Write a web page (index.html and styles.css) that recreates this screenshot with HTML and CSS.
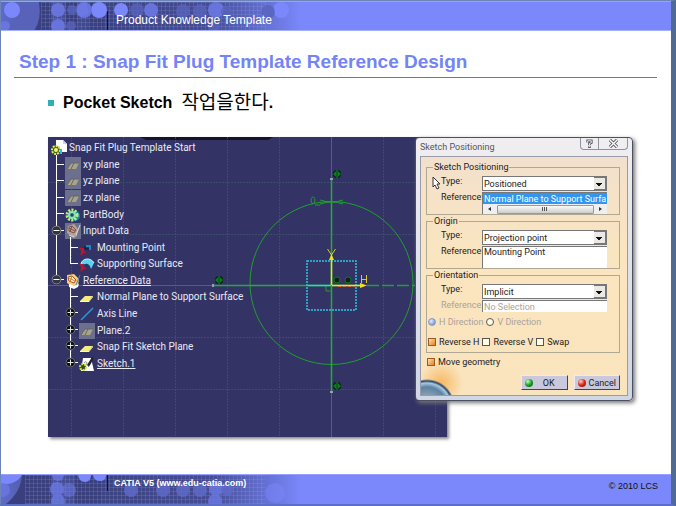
FILE: index.html
```html
<!DOCTYPE html>
<html lang="ko">
<head>
    <meta charset="UTF-8">
    <meta name="viewport" content="width=device-width, initial-scale=1.0">
    <title>Product Knowledge Template</title>
    <link rel="stylesheet" href="styles.css">
</head>
<body>
<!-- Shared icons -->
<svg class="sprite" aria-hidden="true">
    <defs>
        <symbol id="plane" viewBox="0 0 16 16">
            <path d="M1 12 6 7h8l-4 5z" fill="#f4ec7c"/>
            <path d="M1 12h9l4-5v1l-4 5H1z" fill="#fffbd0"/>
        </symbol>
        <symbol id="plane-hidden" viewBox="0 0 16 16">
            <rect width="16" height="16" fill="#6c708e"/>
            <path d="M2 12 6 6h8l-3 6z" fill="#aaa487"/>
            <path d="M2 12 6 6h8M6 12l3-6" fill="none" stroke="#62646c"/>
        </symbol>
        <symbol id="gear" viewBox="0 0 16 16">
            <circle cx="10" cy="9" r="5" fill="#168ca0"/>
            <circle cx="7" cy="8" r="5" fill="none" stroke="#b7f084" stroke-width="3" stroke-dasharray="2 1.2"/>
            <circle cx="7" cy="8" r="3" fill="#2e756a" stroke="#8fe0b8" stroke-width="2"/>
            <circle cx="7" cy="8" r="1" fill="#193c5b"/>
        </symbol>
        <symbol id="part" viewBox="0 0 16 16">
            <path d="M5 0h7l4 4v8H5z" fill="#fff"/>
            <path d="M12 0v4h4" fill="#cdd3ef"/>
            <circle cx="5" cy="10" r="4" fill="#45621d" stroke="#d9ed4b" stroke-width="2" stroke-dasharray="2 1"/>
            <circle cx="5" cy="10" r="2" fill="#f3f383"/>
            <path d="M10 9v5" stroke="#39b8dc" stroke-width="2"/>
        </symbol>
        <symbol id="set" viewBox="0 0 16 16">
            <path d="M2 2 9 1l5 5-1 7-4 2-7-5z" fill="#f6cf72"/>
            <path d="m3 4 4-1 4 4-2 3-5-2z" fill="#fff2bd" stroke="#a6542d"/>
            <path d="m4 5 6 3M7 3 5 9" stroke="#d78335"/>
            <path d="M4 11c3 0 4 2 6 2l4-2-1 3-4 2-5-2z" fill="#fff"/>
            <path d="m11 12 4-10" stroke="#4685ce"/>
        </symbol>
        <symbol id="set-hidden" viewBox="0 0 16 16">
            <rect width="16" height="16" fill="#6c708e"/>
            <path d="M3 3 9 1l4 5-1 7-3 2-7-5z" fill="#b5a594"/>
            <path d="m4 4 3-1 4 4-2 3-5-2zM4 5l6 3M7 3 5 9" fill="none" stroke="#81504c"/>
            <path d="m11 12 4-10M4 12l5 2" stroke="#d5d8df"/>
        </symbol>
        <symbol id="point" viewBox="0 0 16 16">
            <path d="M7 6h4v4" fill="none" stroke="#2184c9" stroke-width="2"/>
            <path d="M6 6v3h4" fill="none" stroke="#11151f"/>
            <path d="M5 9H2l3 3H2M4 12l-2 3" fill="none" stroke="#b6182c" stroke-width="2"/>
        </symbol>
        <symbol id="surface" viewBox="0 0 16 16">
            <path d="M2 8C3 2 12 1 15 7l-3 6C11 8 7 6 3 10z" fill="#5bd2ef"/>
            <path d="M2 8C3 2 12 1 15 7" fill="none" stroke="#c3f5ff"/>
            <path d="M5 9H2l3 3H2M4 12l-2 3" fill="none" stroke="#b6182c" stroke-width="2"/>
        </symbol>
        <symbol id="axis" viewBox="0 0 16 16">
            <path d="M2 14 14 2" stroke="#2a9ae0" stroke-width="1.500"/>
        </symbol>
        <symbol id="sketch" viewBox="0 0 16 16">
            <path d="M4 2h8l3 13H2z" fill="#fff"/>
            <path d="m13 1-5 8 2 2 5-9z" fill="#20242b"/>
            <path d="M5 7c2-3 4 0 2 2" fill="none" stroke="#888"/>
            <circle cx="4" cy="11" r="3" fill="#314f18" stroke="#cde449" stroke-width="2" stroke-dasharray="2 1"/>
            <path d="m9 14 2-5 3 6z" fill="#fff"/>
        </symbol>
        <symbol id="expand" viewBox="0 0 10 10">
            <circle cx="5" cy="5" r="4.500" fill="#101116" stroke="#6f727a"/>
            <path d="M2 5h6M5 2v6" stroke="#e4e4e4"/>
        </symbol>
        <symbol id="collapse" viewBox="0 0 10 10">
            <circle cx="5" cy="5" r="4.500" fill="#33363d" stroke="#85888f"/>
            <path d="M2 5h6" stroke="#fff"/>
        </symbol>
        <symbol id="coincide" viewBox="0 0 10 10">
            <circle cx="5" cy="5" r="4" fill="#071b12"/>
            <path d="M5 1v8" stroke="#13a22a"/>
            <path d="M4 2 1 5l3 3zM6 2l3 3-3 3z" fill="#0d7c1e"/>
        </symbol>
        <pattern id="weave" width="4" height="4" patternUnits="userSpaceOnUse">
            <path d="M0 .5h4M.5 0v4" stroke="#96a1ee" stroke-opacity=".2"/>
        </pattern>
        <linearGradient id="band">
            <stop offset="0" stop-color="#5f6bc9"/>
            <stop offset=".12" stop-color="#4b549f"/>
            <stop offset=".35" stop-color="#3c4382"/>
            <stop offset=".7" stop-color="#454c94"/>
            <stop offset=".88" stop-color="#6470d2"/>
            <stop offset="1" stop-color="#7a88fb"/>
        </linearGradient>
    </defs>
</svg>

<div class="slide">
    <header class="bar">
        <svg class="bar-art" viewBox="0 0 300 28" aria-hidden="true">
            <rect width="300" height="28" fill="url(#band)"/>
            <path d="M33 28Q41 15 38 0H16v13L5 28z" fill="#5762b8"/>
            <path d="M34 28Q41 18 38 0h12v28zM65 0h11v28H65zM88 0h15v28H88z" fill="#3a407e"/>
            <rect x="40" width="225" height="28" fill="url(#weave)"/>
            <g fill="#7a88fb">
                <circle cx="11" cy="8" r="8"/><circle cx="98" cy="8" r="8"/>
                <circle cx="120" cy="8" r="7"/><circle cx="280" cy="8" r="8"/>
                <path d="M76 9a8 8 0 0 1 9-8l3 10-8 4z"/>
            </g>
            <g fill="#6b78e3" opacity=".9">
                <circle cx="57" cy="8" r="7"/><circle cx="57" cy="24" r="7"/>
                <circle cx="83" cy="8" r="8"/><circle cx="150" cy="8" r="7"/>
                <circle cx="215" cy="8" r="8"/>
                <circle cx="4" cy="24" r="5"/>
            </g>
            <g fill="#5863bb" opacity=".8">
                <circle cx="71" cy="8" r="5"/><circle cx="136" cy="8" r="7"/>
                <circle cx="182" cy="9" r="7"/><circle cx="199" cy="9" r="7"/>
                <circle cx="267" cy="10" r="7"/><circle cx="70" cy="24" r="5"/>
                <circle cx="226" cy="10" r="6"/><circle cx="213" cy="25" r="6"/>
            </g>
        </svg>
        <p class="bar-title">Product Knowledge Template</p>
    </header>

    <main>
        <h1>Step 1 : Snap Fit Plug Template Reference Design</h1>
        <ul class="points">
            <li>Pocket Sketch <span class="korean">작업을한다</span>.</li>
        </ul>

        <div class="figure">
            <!-- 3D viewer with specification tree -->
            <section class="viewer">
                <svg class="drawing" viewBox="0 0 399 300" preserveAspectRatio="xMinYMin slice" aria-hidden="true">
                    <path d="M92 0h133l-5 3H98z" fill="#14142a"/>
                    <g stroke="#41596c" stroke-dasharray="2 1" opacity=".7">
                        <path d="M23.500 0v300M75.500 0v300M127.500 0v300M179.500 0v300M231.500 0v300M335.500 0v300M387.500 0v300"/>
                        <path d="M0 45.500h399M0 97.500h399M0 200.500h399M0 252.500h399"/>
                    </g>
                    <path d="M0 148.500h165M283.500 0v300" stroke="#35784c"/>
                    <g fill="none" stroke="#20a02c">
                        <circle cx="283.500" cy="146" r="81.500"/>
                        <path d="M165 148.500h150M283.500 41v214" stroke="#20b02c" stroke-width="1.500"/>
                        <path d="M319 148.500h49" stroke-dasharray="12 3" stroke-width="1.500"/>
                        <path d="M272 63q12 4 23 0M272 67q12-4 23 0M265 67c3-2 2-7 0-7s-3 5 0 7m2 1h5M278 149v5h6"/>
                    </g>
                    <rect x="259" y="124" width="49" height="49" fill="none" stroke="#2bc6e0" stroke-width="1.500" stroke-dasharray="2 1"/>
                    <path d="M260 148.500h23" stroke="#2bd6d0" stroke-width="1.500"/>
                    <path d="M283.500 148V122M284 148.500h31" stroke="#f0e020" stroke-width="1.500"/>
                    <path d="m281 123 2.500-6 2.500 6zM312 146l7 2.500-7 2.500z" fill="#f0e020"/>
                    <path d="m279.500 112 4 6 4-6M313.500 138v8M318.500 138v8M313 142.500h5" fill="none" stroke="#d8cc24"/>
                    <path d="M290 149.500h17" stroke="#e06a2c" stroke-dasharray="3 2"/>
                    <g fill="#0b2417" stroke="#117328">
                        <circle cx="289" cy="143" r="3"/><circle cx="300" cy="143" r="3"/>
                    </g>
                    <use href="#coincide" x="284" y="32" width="10" height="10"/>
                    <use href="#coincide" x="166" y="138" width="10" height="10"/>
                    <use href="#coincide" x="284" y="244" width="10" height="10"/>
                    <path d="M282 41h3v2h-3zM164 147h2v3h-2zM282 254h3v2h-3z" fill="#9a9db0"/>
                </svg>

                <ul class="tree">
                    <li><svg><use href="#part"/></svg>Snap Fit Plug Template Start</li>
                    <li class="level-1"><svg><use href="#plane-hidden"/></svg>xy plane</li>
                    <li class="level-1"><svg><use href="#plane-hidden"/></svg>yz plane</li>
                    <li class="level-1"><svg><use href="#plane-hidden"/></svg>zx plane</li>
                    <li class="level-1"><svg><use href="#gear"/></svg>PartBody</li>
                    <li class="level-1"><svg><use href="#set-hidden"/></svg>Input Data</li>
                    <li class="level-2"><svg><use href="#point"/></svg>Mounting Point</li>
                    <li class="level-2"><svg><use href="#surface"/></svg>Supporting Surface</li>
                    <li class="level-1"><svg><use href="#set"/></svg><u>Reference Data</u></li>
                    <li class="level-2"><svg><use href="#plane"/></svg>Normal Plane to Support Surface</li>
                    <li class="level-2"><svg><use href="#axis"/></svg>Axis Line</li>
                    <li class="level-2"><svg><use href="#plane-hidden"/></svg>Plane.2</li>
                    <li class="level-2"><svg><use href="#plane"/></svg>Snap Fit Sketch Plane</li>
                    <li class="level-2"><svg><use href="#sketch"/></svg><u>Sketch.1</u></li>
                </ul>
                <svg class="branches" viewBox="0 0 50 240" aria-hidden="true">
                    <path d="M8.500 18v125M8 27.500h8M8 43.500h8M8 60.500h8M8 76.500h8M8 93.500h8M22.500 100v27M22 110.500h8M22 126.500h8M8 142.500h8M22.500 149v77M22 159.500h8M22 175.500h8M22 192.500h8M22 208.500h8M22 225.500h8" fill="none" stroke="#fff"/>
                    <use href="#collapse" x="3.500" y="88.500" width="10" height="10"/>
                    <use href="#collapse" x="3.500" y="137.500" width="10" height="10"/>
                    <use href="#expand" x="17.500" y="170.500" width="10" height="10"/>
                    <use href="#expand" x="17.500" y="187.500" width="10" height="10"/>
                    <use href="#expand" x="17.500" y="203.500" width="10" height="10"/>
                    <use href="#expand" x="17.500" y="220.500" width="10" height="10"/>
                </svg>
            </section>

            <!-- Sketch Positioning dialog -->
            <form class="dialog">
                <div class="dialog-head">
                    <h2>Sketch Positioning</h2>
                    <div class="caption-buttons">
                        <button type="button" aria-label="Help">
                            <svg viewBox="0 0 10 10"><path d="M3 4V2h4v2L5 5v2M5 8v2" fill="none" stroke="#555a66" stroke-width="3"/><path d="M3 4V2h4v2L5 5v2M5 8v1" fill="none" stroke="#fff"/></svg>
                        </button>
                        <button type="button" aria-label="Close">
                            <svg viewBox="0 0 10 10"><path d="m1 1 8 8M9 1 1 9" stroke="#555a66" stroke-width="3.500"/><path d="m1 1 8 8M9 1 1 9" stroke="#fff" stroke-width="1.500"/></svg>
                        </button>
                    </div>
                </div>
                <div class="dialog-body">
                    <fieldset>
                        <legend>Sketch Positioning</legend>
                        <div class="fields">
                            <label for="pos-type">Type:</label>
                            <select id="pos-type"><option>Positioned</option></select>
                            <label for="pos-ref">Reference:</label>
                            <div class="listbox">
                                <input id="pos-ref" class="selected" value="Normal Plane to Support Surface" readonly>
                                <div class="scrollbar"><span class="arrow-left"></span><span class="thumb"></span><span class="arrow-right"></span></div>
                            </div>
                        </div>
                        <svg class="cursor" viewBox="0 0 9 14" aria-hidden="true"><path d="M1 1v10l2-2 2 4 2-1-2-4h3z" fill="#fff" stroke="#333"/></svg>
                    </fieldset>
                    <fieldset>
                        <legend>Origin</legend>
                        <div class="fields">
                            <label for="origin-type">Type:</label>
                            <select id="origin-type"><option>Projection point</option></select>
                            <label for="origin-ref">Reference:</label>
                            <textarea id="origin-ref" readonly>Mounting Point</textarea>
                        </div>
                    </fieldset>
                    <fieldset>
                        <legend>Orientation</legend>
                        <div class="fields">
                            <label for="orient-type">Type:</label>
                            <select id="orient-type"><option>Implicit</option></select>
                            <label for="orient-ref" class="disabled">Reference:</label>
                            <input id="orient-ref" value="No Selection" disabled>
                        </div>
                        <div class="choices disabled">
                            <label><input type="radio" name="direction" checked disabled>H Direction</label>
                            <label><input type="radio" name="direction" disabled>V Direction</label>
                        </div>
                        <div class="choices">
                            <label><input type="checkbox" checked>Reverse H</label>
                            <label><input type="checkbox">Reverse V</label>
                            <label><input type="checkbox">Swap</label>
                        </div>
                    </fieldset>
                    <div class="choices geometry">
                        <label><input type="checkbox" checked>Move geometry</label>
                    </div>
                    <div class="actions">
                        <button type="button" class="ok"><span class="lamp green"></span>OK</button>
                        <button type="button"><span class="lamp red"></span>Cancel</button>
                    </div>
                </div>
            </form>
        </div>
    </main>

    <footer class="bar">
        <svg class="bar-art" viewBox="0 0 300 29" aria-hidden="true">
            <rect width="300" height="29" fill="url(#band)"/>
            <path d="M21 0h29v29H5q15-12 16-29zM74 0h26v29H74z" fill="#3a407e"/>
            <rect x="24" width="240" height="29" fill="url(#weave)"/>
            <g fill="#7a88fb">
                <path d="M0 0h21q-5 8-14 9H0zM77 0h13q0 7-6 7t-7-7zM92 0h13q0 6-6 6t-7-6z"/>
                <circle cx="274" cy="18" r="10" opacity=".5"/>
            </g>
            <g fill="#6b78e3" opacity=".8">
                <circle cx="2" cy="15" r="7"/><circle cx="57" cy="0" r="6"/>
                <circle cx="56" cy="14" r="7"/><circle cx="57" cy="26" r="7"/>
                <circle cx="68" cy="15" r="7" opacity=".7"/>
                <circle cx="215" cy="14" r="7"/><circle cx="214" cy="26" r="7"/>
            </g>
            <g fill="#5f6bc9" opacity=".8">
                <circle cx="130" cy="15" r="7"/><circle cx="162" cy="15" r="7"/>
                <circle cx="182" cy="15" r="7"/><circle cx="199" cy="15" r="7"/>
                <circle cx="226" cy="15" r="6"/>
            </g>
        </svg>
        <p class="bar-source">CATIA V5 (www.edu-catia.com)</p>
        <p class="bar-copy">© 2010 LCS</p>
    </footer>
</div>
</body>
</html>
```
FILE: styles.css
```css
* {
    box-sizing: border-box;
}

body {
    margin: 0;
    font-family: "Liberation Sans", "Noto Sans CJK KR", Arial, sans-serif;
    background-color: #5d78ae;
}

p, h1, h2, ul {
    margin: 0;
    padding: 0;
}

ul {
    list-style: none;
}

.sprite {
    position: absolute;
    width: 0;
    height: 0;
}

/* Slide frame */
.slide {
    display: flex;
    flex-direction: column;
    min-height: 100vh;
    border: 1px solid #6c84b8;
    border-right: 5px solid #4f6b94;
    border-bottom: 2px solid #5b70c4;
    background-color: #fff;
}

main {
    flex: 1;
}

/* Header and footer bands */
.bar {
    position: relative;
    display: flex;
    height: 30px;
    border-top: 1px solid #95a1fb;
    background-color: #7a88fb;
    color: #fff;
}

header.bar {
    border-bottom: 1px solid #a5b0ff;
}

.bar-art {
    position: absolute;
    left: 0;
    top: 0;
    height: 100%;
}

.bar p {
    position: relative;
}

.bar-title {
    align-self: flex-end;
    margin-left: 106px;
    padding-left: 8px;
    border-left: 1px solid #10122c;
    font-size: 12px;
    line-height: 19px;
}

.bar-source {
    align-self: flex-start;
    margin-left: 106px;
    padding-left: 6px;
    border-left: 1px solid #10122c;
    font-size: 9px;
    font-weight: bold;
    line-height: 16px;
}

.bar-copy {
    margin-left: auto;
    padding-right: 13px;
    color: #111;
    font-size: 9px;
    line-height: 22px;
}

/* Slide text */
h1 {
    margin: 0 14px 0 13px;
    padding: 18px 0 3px 5px;
    border-bottom: 1px solid #6a6ad8;
    color: #7384f8;
    font-size: 19px;
    line-height: 25px;
}

.points {
    padding: 14px 0 0 47px;
}

.points li {
    display: flex;
    align-items: center;
    font-size: 16px;
    font-weight: bold;
    line-height: 22px;
}

.points li::before {
    content: "";
    width: 6px;
    height: 6px;
    margin-right: 9px;
    background-color: #2eb0b4;
}

.korean {
    margin-left: 9px;
    font-size: 19px;
    font-weight: normal;
}

/* Viewer and dialog */
.figure {
    display: grid;
    grid-template-columns: 1fr 218px;
    align-items: start;
    margin: 23px 38px 0 47px;
    font-family: Roboto, "Noto Sans CJK KR", sans-serif;
}

.viewer {
    position: relative;
    height: 300px;
    margin-right: -32px;
    background-color: #333366;
    box-shadow: 2px 2px 3px #888;
}

.drawing {
    position: absolute;
    width: 100%;
    height: 100%;
}

.tree {
    position: relative;
    display: grid;
    grid-auto-rows: 1fr;
    height: 235px;
    padding: 3px 0 0 3px;
    color: #e9e9f4;
    font-size: 10px;
    line-height: 16px;
}

.tree li {
    display: flex;
    align-items: center;
    gap: 2px;
    white-space: nowrap;
}

.tree svg {
    width: 16px;
    height: 16px;
}

.tree .level-1 {
    padding-left: 14px;
}

.tree .level-2 {
    padding-left: 28px;
}

.branches {
    position: absolute;
    left: 0;
    top: 0;
    width: 50px;
    height: 240px;
}

.dialog {
    position: relative;
    padding: 0 4px 4px;
    border: 1px solid #4b5060;
    border-radius: 4px;
    background: linear-gradient(#f0eef0, #cfd6e4);
    box-shadow: 2px 2px 4px #777;
    color: #222;
    font-size: 9px;
    line-height: 10px;
}

.dialog-head {
    display: flex;
    justify-content: space-between;
    height: 18px;
}

.dialog-head h2 {
    color: #555;
    font-size: 9px;
    font-weight: normal;
    line-height: 18px;
}

.caption-buttons {
    display: flex;
    height: 12px;
    border: 1px solid #8e93a0;
    border-top: 0;
    border-radius: 0 0 4px 4px;
}

.caption-buttons button {
    display: flex;
    align-items: center;
    justify-content: center;
    width: 17px;
    padding: 0;
    border: 0;
    background: none;
}

.caption-buttons button + button {
    width: 29px;
    border-left: 1px solid #8e93a0;
}

.caption-buttons svg {
    width: 9px;
    height: 9px;
}

.dialog-body {
    padding: 5px 7px 5px 5px;
    border: 1px solid #989caa;
    background:
        radial-gradient(circle at 6px calc(100% + 12px), #8b9cae 0 12px, #5c83a6 20px, #a9c8da 24px, #27466a 26px, transparent 28px),
        radial-gradient(circle at 20px calc(100% - 12px), #f7b964, transparent 22px),
        linear-gradient(#f3e0cd, #f9e5bf 40%, #f9e4be);
}

fieldset {
    position: relative;
    min-width: 0;
    margin: 0 0 1px;
    padding: 4px 12px 0 14px;
    border: 1px solid #b1a894;
}

legend {
    margin-left: -8px;
    padding: 0 1px;
}

.fields {
    display: grid;
    grid-template-columns: 41px 1fr;
    gap: 1px 0;
}

.fields > label {
    white-space: nowrap;
}

select, textarea, .fields input {
    display: block;
    width: 100%;
    min-width: 0;
    margin: 0;
    padding: 0 1px;
    border: 0;
    border-top: 1px solid #777;
    border-left: 1px solid #777;
    border-radius: 0;
    background-color: #fff;
    color: #222;
    font: inherit;
}

select {
    appearance: none;
    height: 15px;
    background:
        conic-gradient(from -45deg at 50% 100%, #111 90deg, transparent 0) right 4px top 6px / 6px 3px no-repeat,
        linear-gradient(#ece9e4, #ece9e4) right 1px top 1px / 11px 11px no-repeat,
        linear-gradient(#777, #777) right 0 top 0 / 12px 100% no-repeat,
        #fff;
    border-bottom: 1px solid #777;
    border-right: 1px solid #777;
}

textarea {
    height: 22px;
    resize: none;
    overflow: hidden;
}

.fields input {
    height: 12px;
}

.listbox {
    height: 22px;
    border-left: 1px solid #777;
    background-color: #fff;
}

.fields .selected {
    height: 12px;
    border-left: 0;
    background-color: #3296f0;
    color: #fff;
}

.scrollbar {
    display: flex;
    align-items: center;
    justify-content: space-between;
    height: 10px;
    padding: 0 5px;
    background-color: #efefef;
}

.arrow-left, .arrow-right {
    border: 2px solid transparent;
    border-right: 3px solid #333;
    border-left: 0;
}

.arrow-right {
    border-right: 0;
    border-left: 3px solid #333;
}

.thumb {
    width: 97px;
    height: 9px;
    border: 1px solid #999;
    border-radius: 1px;
    background:
        repeating-linear-gradient(90deg, #555 0 1px, transparent 1px 2px) center / 6px 4px no-repeat,
        linear-gradient(#fafafa, #ccc);
}

.cursor {
    position: absolute;
    left: 5px;
    top: 4px;
    width: 9px;
    height: 14px;
}

.disabled, .fields input:disabled {
    color: #aaa39a;
}

.choices {
    display: flex;
    gap: 3px;
    height: 20px;
    margin-left: -13px;
    white-space: nowrap;
}

.choices label {
    display: flex;
    align-items: center;
    gap: 3px;
}

.choices input {
    appearance: none;
    width: 8px;
    height: 8px;
    margin: 0;
    border: 1px solid #555;
    background-color: #fffbe0;
}

.choices input:checked {
    border-color: #9c5a28;
    background: linear-gradient(135deg, #ffe0b0, #e88018);
}

.choices input[type="radio"] {
    border-radius: 50%;
}

.choices input[type="radio"]:checked {
    border-color: #8a9cc4;
    background: radial-gradient(circle at 35% 35%, #e5eeff, #5277c8);
}

.choices.geometry {
    height: 16px;
    margin-left: 1px;
}

.actions {
    display: flex;
    justify-content: flex-end;
    gap: 6px;
    padding-top: 5px;
}

.actions button {
    display: flex;
    align-items: center;
    gap: 3px;
    height: 15px;
    padding: 0 3px;
    border: 1px solid #eceaf4;
    border-right-color: #444;
    border-bottom-color: #444;
    background-color: #c9c8dc;
    color: #222;
    font: inherit;
}

.actions .ok {
    gap: 10px;
    padding-right: 12px;
}

.lamp {
    width: 8px;
    height: 8px;
    border-radius: 50%;
}

.green {
    background: radial-gradient(circle at 35% 30%, #c8ffc0, #16a020 50%, #0a5010);
}

.red {
    background: radial-gradient(circle at 35% 30%, #ffd0c8, #d82818 50%, #701008);
}
```
